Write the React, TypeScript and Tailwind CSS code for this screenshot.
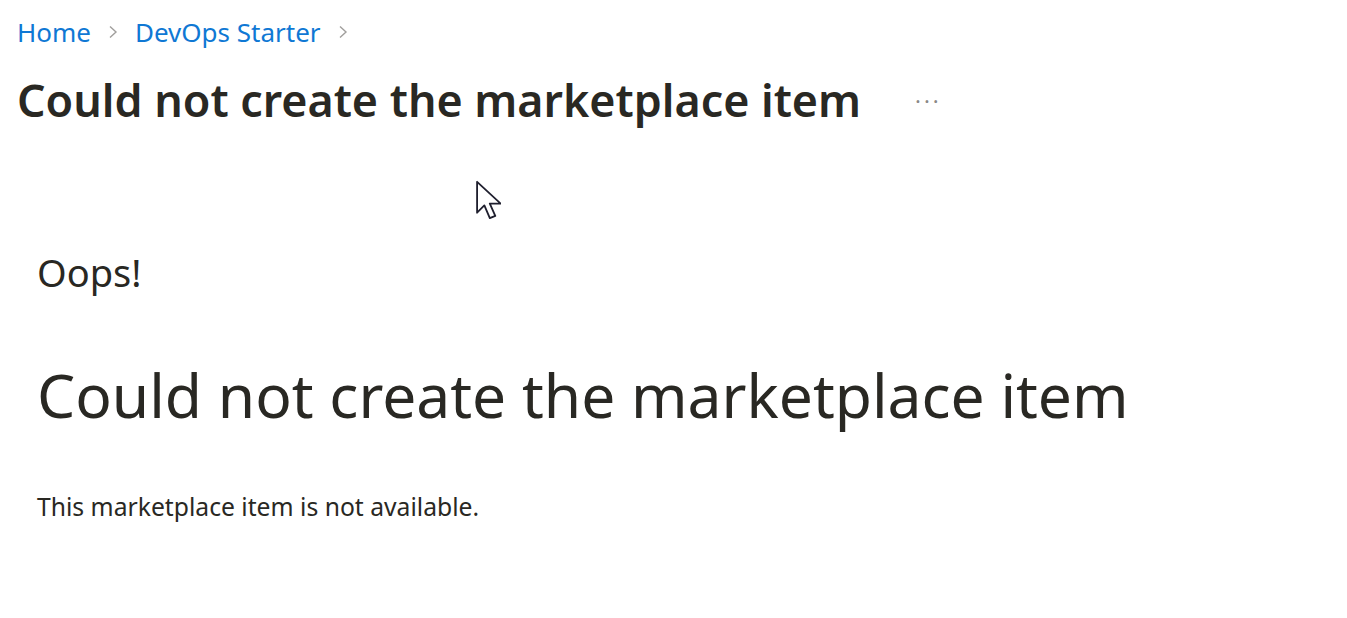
import React from "react";

const Chevron = () => (
  <svg viewBox="0 0 16 16" className="w-[16px] h-[22px]" fill="none" stroke="#a19f9d" strokeWidth="1.4">
    <path d="M5 2.5l6 5.5-6 5.5" />
  </svg>
);

const Cursor = () => (
  <svg viewBox="0 0 14 22" className="w-[26px] h-[40px]">
    <path
      d="M1 1v17l4-4 3 7 3-1.3-3-6.7h6z"
      fill="#fff"
      stroke="#1f1f2e"
      strokeWidth="1"
      strokeLinejoin="round"
    />
  </svg>
);

export default function App() {
  return (
    <div
      className="relative w-[1347px] h-[618px] bg-white text-[#292823] overflow-hidden"
      style={{ fontFamily: '"Noto Sans", "Open Sans", sans-serif' }}
    >
      {/* breadcrumb */}
      <nav className="flex items-center gap-[14px] pl-[17px] pt-[14px] text-[26px] leading-[36px] text-[#0f78d4]">
        <span>Home</span>
        <Chevron />
        <span>DevOps Starter</span>
        <Chevron />
      </nav>

      {/* header */}
      <div className="flex items-center pl-[17px] mt-[22px]">
        <h1 className="text-[44.8px] leading-[56px] font-semibold">Could not create the marketplace item</h1>
        <span className="ml-[54px] text-[22px] text-[#8a8886] tracking-[3px]">···</span>
      </div>

      <div className="absolute left-[475px] top-[180px]">
        <Cursor />
      </div>

      {/* error body */}
      <div className="pl-[37px] pt-[122px]">
        <p className="text-[38px] leading-[44px]">Oops!</p>
        <h2 className="mt-[61px] text-[60.5px] leading-[80px]">Could not create the marketplace item</h2>
        <p className="mt-[57px] text-[24.7px] leading-[30px]">This marketplace item is not available.</p>
      </div>
    </div>
  );
}
